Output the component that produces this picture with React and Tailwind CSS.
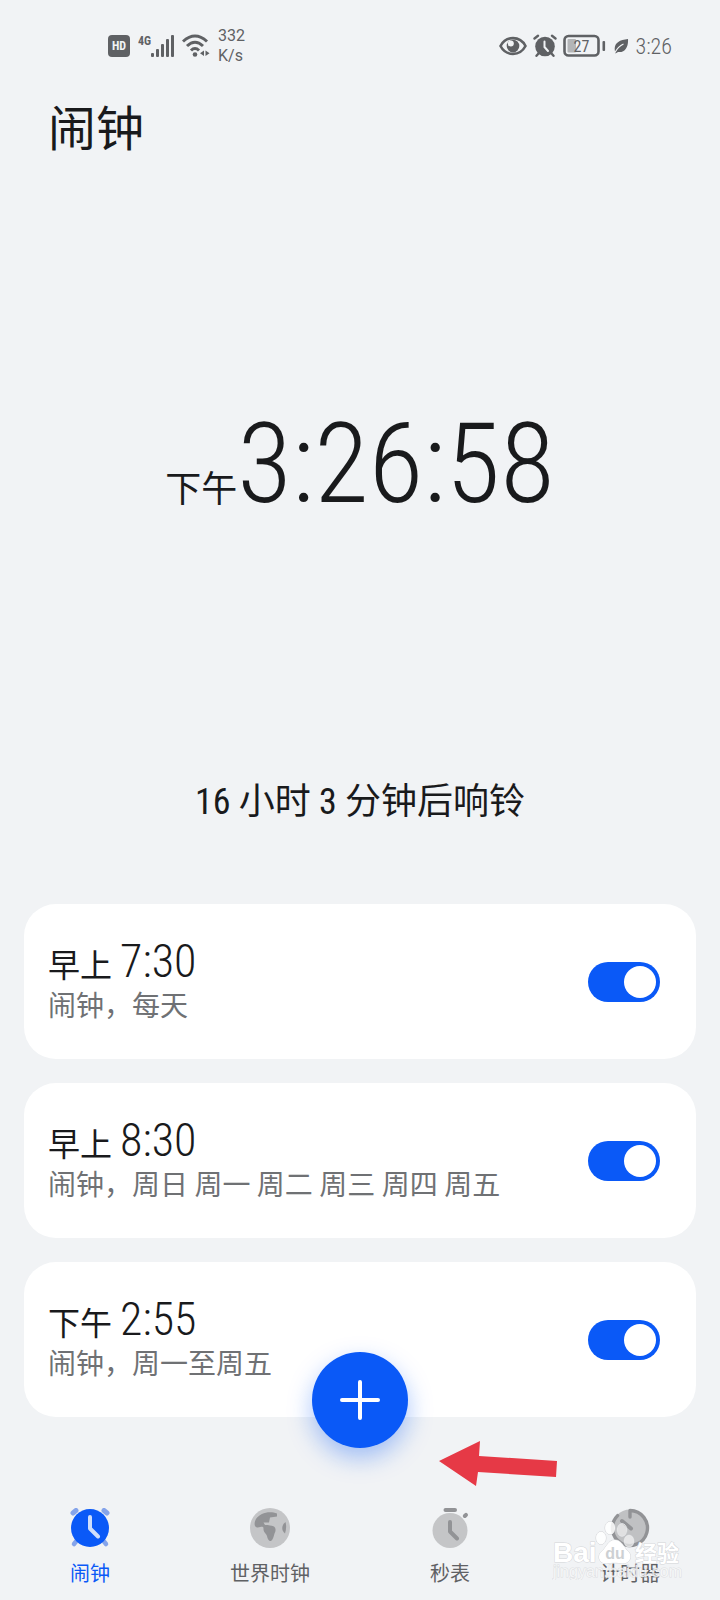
import React, { useState } from 'react';

const alarms = [
  { id: 1, period: '早上', time: '7:30', repeat: '闹钟，每天' },
  { id: 2, period: '早上', time: '8:30', repeat: '闹钟，周日 周一 周二 周三 周四 周五' },
  { id: 3, period: '下午', time: '2:55', repeat: '闹钟，周一至周五' },
];

const SignalIcon = () => (
  <svg className="h-6 w-9" viewBox="0 0 36 24" fill="#5f6164">
    <text x="0" y="11" fontSize="12" fontWeight="700" fontFamily="'Roboto Condensed', 'Open Sans Condensed', Roboto, sans-serif">4G</text>
    <rect x="13" y="19" width="3" height="4" rx="1" />
    <rect x="18" y="15" width="3" height="8" rx="1" />
    <rect x="23" y="10" width="3" height="13" rx="1" />
    <rect x="28" y="5" width="3" height="18" rx="1" />
    <rect x="33" y="1" width="3" height="22" rx="1" />
  </svg>
);

const WifiIcon = () => (
  <svg className="h-6 w-7" viewBox="0 0 28 24" fill="none" stroke="#5f6164" strokeWidth="3">
    <path d="M1 7.500Q13 -3.500 25 7.500" />
    <path d="M5 12Q13 4.500 21 12" />
    <path d="M9 16.500Q13 12.500 17 16.500" />
    <circle cx="13" cy="20.500" r="2.300" fill="#5f6164" stroke="none" />
    <path d="M22 16.500v5.500l-4 -2.700zM23.500 16.500v5.500l4 -2.700z" fill="#5f6164" stroke="none" />
  </svg>
);

const EyeIcon = () => (
  <svg className="h-5 w-7" viewBox="0 0 28 20">
    <path d="M1.500 10C7 -0.500 21 -0.500 26.500 10C21 20.500 7 20.500 1.500 10Z" fill="none" stroke="#5f6164" strokeWidth="2.600" />
    <circle cx="14" cy="10" r="6.300" fill="#5f6164" />
    <circle cx="11.800" cy="7.500" r="3" fill="#f1f3f5" />
  </svg>
);

const StatusAlarmIcon = () => (
  <svg className="h-6 w-6" viewBox="0 0 24 24" fill="none" stroke="#5f6164" strokeLinecap="round">
    <circle cx="12" cy="12.500" r="9.800" fill="#5f6164" stroke="none" />
    <path d="M1.500 4.500L5 1.800M22.500 4.500L19 1.800M5.500 19.500L3.500 21.800M18.500 19.500L20.500 21.800" strokeWidth="2.400" />
    <path d="M11.500 7.500V13L15 17" stroke="#f1f3f5" strokeWidth="2" />
  </svg>
);

const BatteryIcon = () => (
  <svg className="h-6 w-11" viewBox="0 0 44 24">
    <rect x="1.500" y="2" width="34" height="19.500" rx="4" fill="none" stroke="#5f6164" strokeWidth="2.600" />
    <rect x="4.500" y="5" width="8.500" height="13.500" rx="1" fill="#b3b5b7" />
    <rect x="39.500" y="7" width="2.600" height="10" rx="1" fill="#5f6164" />
    <text x="18.500" y="17.500" textAnchor="middle" fontSize="16" fill="#5f6164" fontFamily="'Roboto Condensed', 'Open Sans Condensed', Roboto, sans-serif">27</text>
  </svg>
);

const LeafIcon = () => (
  <svg className="h-4 w-4" viewBox="0 0 16 16">
    <path d="M15 1C15.500 9 12 15 5 14L2.500 15.500C-0.500 6 5 2 15 1Z" fill="#5f6164" />
    <path d="M2 14.500Q5 8.500 10.500 6" fill="none" stroke="#f1f3f5" strokeWidth="1.200" />
  </svg>
);

const AlarmTabIcon = () => (
  <svg className="h-10 w-10" viewBox="0 0 40 40" fill="none" strokeLinecap="round">
    <path d="M3 5L6 2.500M37 5L34 2.500" stroke="#85a4ea" strokeWidth="5" />
    <path d="M6 33.500L4 36M34 33.500L36 36" stroke="#85a4ea" strokeWidth="4.500" />
    <circle cx="20" cy="20" r="19" fill="#0a59f7" />
    <path d="M20 9V20.500L28 28.500" stroke="#cfdefb" strokeWidth="4" strokeLinejoin="round" />
  </svg>
);

const WorldTabIcon = () => (
  <svg className="h-10 w-10" viewBox="0 0 40 40">
    <circle cx="20" cy="20" r="20" fill="#c4c5c7" />
    <path d="M27 5.500C20 2.500 10 4.500 6 11C4 15 4 18.500 7 19.500C10 20 12.500 17.500 13.500 20C13 24 16 25.500 17 28C17.500 31 19 33.500 21 33C23 31.500 23.500 29 24.500 25.500C26 23 26 20 24 18.500C21 17.500 19 17 15 17L13.500 14.500L19 14.500L20 9.500L27 8.500Z" fill="#929396" />
    <path d="M35.500 14C31.500 17 31 22 35 25.500Q37 19.500 35.500 14Z" fill="#929396" />
  </svg>
);

const StopwatchTabIcon = () => (
  <svg className="h-10 w-10" viewBox="0 0 40 40" fill="none" strokeLinecap="round">
    <circle cx="20" cy="22.500" r="17.500" fill="#c4c5c7" />
    <path d="M15.500 2H25" stroke="#929396" strokeWidth="4" />
    <path d="M34.800 8L36 6.800" stroke="#929396" strokeWidth="4" />
    <path d="M20 14V23.500L27 30.500" stroke="#929396" strokeWidth="4" strokeLinejoin="round" />
  </svg>
);

const TimerTabIcon = () => (
  <svg className="h-10 w-10" viewBox="0 0 40 40" fill="none" strokeLinecap="round">
    <circle cx="20" cy="20" r="18.500" fill="#c0c1c3" />
    <path d="M20 9V2.500A17.500 17.500 0 1 1 7.600 7.600" stroke="#929396" strokeWidth="3.400" strokeLinejoin="round" />
    <path d="M12 13L21 20.500" stroke="#929396" strokeWidth="4" />
  </svg>
);

const tabs = [
  { label: '闹钟', Icon: AlarmTabIcon },
  { label: '世界时钟', Icon: WorldTabIcon },
  { label: '秒表', Icon: StopwatchTabIcon },
  { label: '计时器', Icon: TimerTabIcon },
];

const Watermark = () => (
  <svg
    className="pointer-events-none absolute bottom-5 right-9 h-16 w-33"
    viewBox="0 0 132 64"
    fill="#ffffff"
    stroke="#d3d5d8"
    strokeWidth="1"
    fontFamily="'Liberation Sans', 'Noto Sans CJK SC', sans-serif"
    paintOrder="stroke"
  >
    <text x="1" y="46" fontSize="28" fontWeight="700">Bai</text>
    <ellipse cx="49" cy="22" rx="5" ry="6.500" fillOpacity="0.850" />
    <ellipse cx="58" cy="12" rx="5" ry="6.500" fillOpacity="0.850" />
    <ellipse cx="70" cy="14" rx="5" ry="6.500" fillOpacity="0.500" />
    <ellipse cx="77" cy="25" rx="5" ry="6" fillOpacity="0.600" />
    <path d="M63 24C70 24 71 31 76 35C81 40 78 48 70 47.500C66 46.500 59 46.500 55 47.500C46 48 45 39 50 35C55 31 56 24 63 24Z" />
    <text x="63" y="43" fontSize="16" fontWeight="700" textAnchor="middle" fill="#cdd0d3" stroke="none">du</text>
    <text x="83" y="45" fontSize="22" fontWeight="700">经验</text>
    <text x="1" y="61" fontSize="16" fillOpacity="0.700" strokeOpacity="0.700">jingyan.baidu.com</text>
  </svg>
);

const App = () => {
  const [enabled, setEnabled] = useState({ 1: true, 2: true, 3: true });
  const [activeTab, setActiveTab] = useState('闹钟');

  return (
    <div className="flex min-h-screen flex-col bg-[#f1f3f5] font-['Roboto_Condensed','Open_Sans_Condensed','Noto_Sans_Condensed',Roboto,'Noto_Sans_CJK_SC',sans-serif] text-[#191a1c]">
      {/* Status bar */}
      <div className="flex h-23 items-center justify-between pl-27 pr-12 text-[#5f6164]">
        <div className="flex items-center gap-2">
          <span className="flex h-5.5 w-5.5 items-center justify-center rounded bg-[#5f6164] text-xs font-bold text-[#f1f3f5]">HD</span>
          <SignalIcon />
          <WifiIcon />
          <span className="font-[Roboto,sans-serif] text-base leading-5">332<br />K/s</span>
        </div>
        <div className="flex items-center gap-1.5">
          <EyeIcon />
          <StatusAlarmIcon />
          <BatteryIcon />
          <LeafIcon />
          <span className="text-[22px] font-light">3:26</span>
        </div>
      </div>

      <h1 className="px-12 text-5xl leading-19">闹钟</h1>

      {/* Current time */}
      <section className="flex h-148 items-center justify-center">
        <p className="flex items-baseline">
          <span className="text-4xl leading-none">下午</span>
          <span className="text-[112px] leading-none font-light">3:26:58</span>
        </p>
      </section>

      <p className="mt-4 text-center text-4xl leading-13">16 小时 3 分钟后响铃</p>

      {/* Alarm list */}
      <ul className="mt-19 flex flex-col gap-6 px-6">
        {alarms.map((alarm) => (
          <li key={alarm.id} className="rounded-4xl bg-white">
            <label className="flex items-center justify-between py-8 pl-6 pr-9">
              <span>
                <span className="flex items-baseline gap-2">
                  <span className="text-[32px] leading-none">{alarm.period}</span>
                  <span className="text-[46px] leading-[51px] font-light">{alarm.time}</span>
                </span>
                <span className="block text-[28px] leading-10 text-[#6f7174]">{alarm.repeat}</span>
              </span>
              <input
                type="checkbox"
                role="switch"
                checked={enabled[alarm.id]}
                onChange={(e) => setEnabled({ ...enabled, [alarm.id]: e.target.checked })}
                className="flex h-10 w-18 appearance-none items-center rounded-full bg-gray-300 px-1 before:h-8 before:w-8 before:rounded-full before:bg-white checked:justify-end checked:bg-[#0a59f7]"
              />
            </label>
          </li>
        ))}
      </ul>

      {/* Bottom navigation */}
      <div className="relative mt-auto">
        <button
          type="button"
          aria-label="添加闹钟"
          className="absolute bottom-38 left-1/2 flex h-24 w-24 -translate-x-1/2 items-center justify-center rounded-full bg-[#0a59f7] shadow-[0_10px_24px_rgba(10,89,247,0.35)]"
        >
          <svg className="h-10 w-10" viewBox="0 0 40 40" stroke="#ffffff" strokeWidth="4" strokeLinecap="round">
            <path d="M20 2V38M2 20H38" />
          </svg>
        </button>
        <svg className="absolute bottom-28 left-[61%] h-12 w-30" viewBox="0 0 120 48" fill="#e63946">
          <path d="M0 21L41 1L40 16L118 21L117 37L39 32L37 46Z" />
        </svg>
        <nav className="grid grid-cols-4 pb-3">
          {tabs.map(({ label, Icon }) => (
            <button
              key={label}
              type="button"
              onClick={() => setActiveTab(label)}
              className={`flex flex-col items-center gap-3 text-xl ${activeTab === label ? 'text-[#0a59f7]' : 'text-[#5f6164]'}`}
            >
              <Icon />
              {label}
            </button>
          ))}
        </nav>
        <Watermark />
      </div>
    </div>
  );
};

export default App;
